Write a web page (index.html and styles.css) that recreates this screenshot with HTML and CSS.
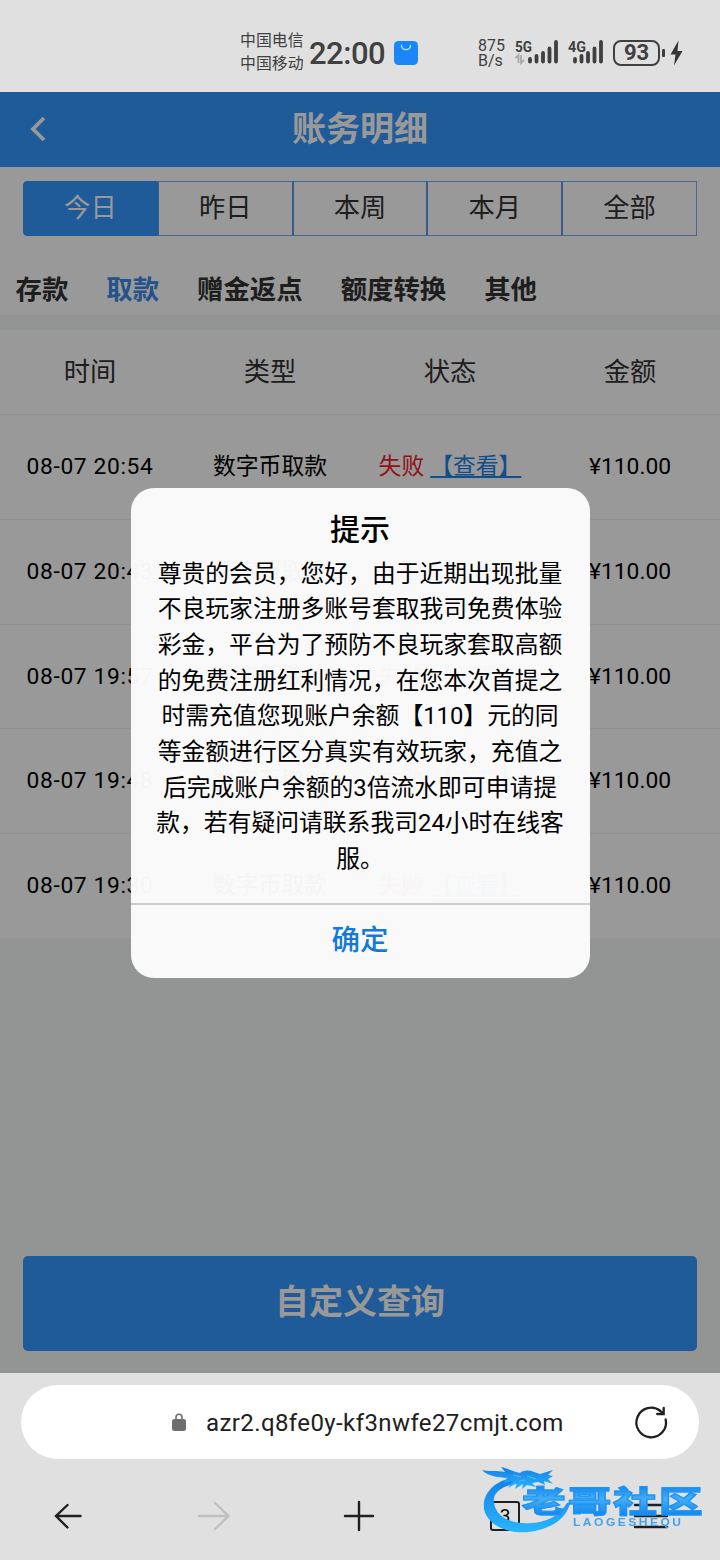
FILE: index.html
```html
<!DOCTYPE html>
<html lang="zh-CN">
<head>
<meta charset="utf-8">
<title>账务明细</title>
<link rel="stylesheet" href="styles.css">
</head>
<body>
<div class="phone">
  <header class="status">
    <div class="carriers"><span>中国电信</span><span>中国移动</span></div>
    <div class="clock">22:00</div>
    <svg class="bag" viewBox="0 0 24 24"><rect width="24" height="24" rx="4.5" fill="#1b86f8"/><path d="M7.5 4.5a4.5 4.2 0 0 0 9 0" fill="none" stroke="#c8f1ff" stroke-width="1.3" stroke-linecap="round"/></svg>
    <div class="rate"><span>875</span><span>B/s</span></div>
    <svg class="signals" viewBox="0 0 90 28">
      <g class="signal-name"><text x="0" y="12.500" textLength="17" lengthAdjust="spacingAndGlyphs">5G</text><text x="53" y="12.500" textLength="18" lengthAdjust="spacingAndGlyphs">4G</text></g>
      <g stroke="#3f3f3f" stroke-width="3.8" stroke-linecap="round"><path d="M15 20v2.5M21.5 17v5.5M28 14v8.500M34.500 9.500v13M41 3v19.500M60 20v2.500M66.500 17v5.500M73 14v8.500M79.500 9.500v13M86 3v19.500"/></g>
      <path d="M0.500 19l3-3v8M6 16v8l3-3" fill="none" stroke="#aaa" stroke-width="1.800"/>
    </svg>
    <div class="battery"><span>93</span></div>
    <i class="battery-tip"></i>
    <svg class="bolt" viewBox="0 0 13 26"><path d="M8.500 0.500L0.500 14.500h5L4 25.500l8.500-14.500h-5z" fill="#353535"/></svg>
  </header>

  <main class="page">
    <div class="titlebar">
      <svg class="back" viewBox="0 0 18 28"><path d="M15 3L4 14l11 11" fill="none" stroke="#fff" stroke-width="3.800"/></svg>
      <h1>账务明细</h1>
    </div>
    <nav class="days">
      <span class="day active">今日</span><span class="day">昨日</span><span class="day">本周</span><span class="day">本月</span><span class="day">全部</span>
    </nav>
    <nav class="kinds">
      <span>存款</span><span class="on">取款</span><span>赠金返点</span><span>额度转换</span><span>其他</span>
    </nav>
    <section class="table">
      <div class="row head"><span>时间</span><span>类型</span><span>状态</span><span>金额</span></div>
      <div class="row"><span class="num time">08-07 20:54</span><span>数字币取款</span><span class="state"><b>失败</b><a>【查看】</a></span><span class="num">¥110.00</span></div>
      <div class="row"><span class="num time">08-07 20:43</span><span>数字币取款</span><span class="state"><b>失败</b><a>【查看】</a></span><span class="num">¥110.00</span></div>
      <div class="row"><span class="num time">08-07 19:57</span><span>数字币取款</span><span class="state"><b>失败</b><a>【查看】</a></span><span class="num">¥110.00</span></div>
      <div class="row"><span class="num time">08-07 19:48</span><span>数字币取款</span><span class="state"><b>失败</b><a>【查看】</a></span><span class="num">¥110.00</span></div>
      <div class="row"><span class="num time">08-07 19:30</span><span>数字币取款</span><span class="state"><b>失败</b><a>【查看】</a></span><span class="num">¥110.00</span></div>
    </section>
    <div class="query">自定义查询</div>
    <div class="mask">
      <div class="dialog">
        <h2>提示</h2>
        <p>尊贵的会员，您好，由于近期出现批量<br>不良玩家注册多账号套取我司免费体验<br>彩金，平台为了预防不良玩家套取高额<br>的免费注册红利情况，在您本次首提之<br>时需充值您现账户余额【<span class="digits">110</span>】元的同<br>等金额进行区分真实有效玩家，充值之<br>后完成账户余额的<span class="digits">3</span>倍流水即可申请提<br>款，若有疑问请联系我司<span class="digits">24</span>小时在线客<br>服。</p>
        <div class="ok">确定</div>
      </div>
    </div>
  </main>

  <footer class="browser">
    <div class="address">
      <svg class="lock" viewBox="0 0 14 18"><rect x="0" y="6" width="14" height="12" rx="2.500" fill="#6e6e6e"/><path d="M4 7V4.300a3 3 0 0 1 6 0V7" fill="none" stroke="#6e6e6e" stroke-width="1.600"/></svg>
      <span class="url">azr2.q8fe0y-kf3nwfe27cmjt.com</span>
      <svg class="reload" viewBox="0 0 36 36"><path d="M32.700 15.500A14.800 14.800 0 1 1 27.500 7L30.500 9.800M30.700 4v6h-6.500" fill="none" stroke="#202020" stroke-width="2.300" stroke-linecap="round"/></svg>
    </div>
    <div class="tools">
      <svg viewBox="0 0 36 36"><path d="M30.500 18H6M17.500 7L6 18l11.500 11.500" /></svg>
      <svg viewBox="0 0 36 36" class="off"><path d="M3 18h29.500M19 5l13.500 13L19 31"/></svg>
      <svg viewBox="0 0 36 36"><path d="M18 4v28M4 18h28"/></svg>
      <span class="tabs">3</span>
      <svg viewBox="0 0 36 36"><path d="M2 7h32M2 18h32M2 29h32"/></svg>
    </div>
    <div class="watermark">
      <svg class="dragon" viewBox="0 0 92 72">
        <defs><linearGradient id="sea" x1="0" y1="0" x2="0" y2="1"><stop offset="0" stop-color="#147ee8"/><stop offset="1" stop-color="#28b6fb"/></linearGradient></defs>
        <path fill="url(#sea)" d="M36 12C13 15 1 29 3 44c4 19 31 28 55 21 18-5 28-14 31-27-3-1-4 1-5 3-8 11-19 16-33 17-20 2-36-6-38-20C11 28 21 20 40 18z"/>
        <path fill="url(#sea)" d="M1 5c8 2 15 0 23 2l-4-5c7 1 12 5 19 6 4-3 9-3 14-1l6 2 13-4-5 5 5 1-5 3 5 5-9-3 1 4-7-3-6 1 4 4-9-2-5 4 1-5-8 5 2-6-9 5 5-7-10 2 4-5C18 12 7 12 1 5z"/>
        <path d="M32 10l8 2M46 11l9 3M38 16l6-1" stroke="#5db9fb" stroke-width="1"/>
      </svg>
      <span class="brand">老哥社区</span>
      <span class="latin">LAOGESHEQU</span>
    </div>
  </footer>
</div>
</body>
</html>
```
FILE: styles.css
```css
* { box-sizing: border-box; }
body { margin: 0; font-family: Roboto, "Noto Sans CJK SC", sans-serif; color: #000; }
h1, h2, p { margin: 0; }
svg { display: block; flex: none; }
.phone { width: 720px; height: 1560px; display: flex; flex-direction: column; background: #e0e0e0; overflow: hidden; }

.status { height: 92px; padding: 14px 0 0 240px; display: flex; align-items: center; color: #404040; white-space: nowrap; }
.carriers { width: 69px; margin-top: -4px; display: flex; flex-direction: column; font: 15.900px/23px "Noto Sans CJK SC", sans-serif; }
.clock { width: 85px; padding-top: 1px; font: 500 31px/40px Roboto, sans-serif; letter-spacing: -.5px; }
.bag { width: 24px; height: 24px; }
.rate { width: 37px; margin-left: 60px; display: flex; flex-direction: column; font-size: 16px; line-height: 15px; }
.signals { width: 90px; height: 28px; }
.signal-name { font: 700 14px Roboto, sans-serif; fill: #404040; }
.battery { width: 47px; height: 26px; margin-left: 8px; border: 2px solid #404040; border-radius: 8px; display: flex; align-items: center; justify-content: center; font-size: 22px; font-weight: 700; line-height: 22px; }
.battery-tip { width: 3px; height: 8px; margin-left: 2px; border-radius: 1px; background: #404040; }
.bolt { width: 13px; height: 26px; margin-left: 5px; }

.page { position: relative; height: 1281px; display: flex; flex-direction: column; background: #f4f8f5; }
.titlebar { height: 75px; flex: none; display: flex; align-items: center; padding-bottom: 2px; background: #3496ff; color: #fff; }
.back { width: 18px; height: 28px; margin-left: 29px; }
.titlebar h1 { flex: 1; padding-right: 47px; text-align: center; font: 700 34px/50px "Noto Sans CJK SC", sans-serif; margin-top: -4px; }
.days { flex: none; padding: 14px 23px 0; height: 69px; display: flex; background: #fff; }
.day { flex: 1; border: 1px solid #7faaf0; border-color: #7daaf0 #5b96ee; display: flex; align-items: center; justify-content: center; padding-bottom: 1px; font-size: 26.300px; line-height: 40px; color: #333; }
.day:last-child { border-right-color: #7daaf0; }
.day.active { background: #3496ff; color: #fff; border-color: #3496ff; border-radius: 4px 0 0 4px; }
.kinds { flex: none; height: 79px; padding: 34px 0 0 15.500px; display: flex; gap: 38px; background: #fff; font-size: 26.400px; font-weight: 700; line-height: 40px; color: #333; }
.kinds .on { color: #3b8ae6; }
.table { flex: none; margin-top: 15px; background: #fff; }
.row { height: 104.750px; display: grid; grid-template-columns: repeat(4, 180px); align-items: center; text-align: center; border-bottom: 1px solid #f1f1f1; padding-top: .5px; font-size: 22.800px; line-height: 36px; white-space: nowrap; }
.row.head { height: 85px; font-size: 26.300px; color: #333; padding: 0; }
.row:last-child { height: 104px; border-bottom: 0; }
.time { letter-spacing: .62px; }
.state { display: flex; justify-content: center; gap: 6px; }
.state b { font-weight: 400; color: #f02028; }
.state a { color: #1e82e6; text-decoration: underline; text-decoration-thickness: 2px; text-underline-offset: 2px; }
.query { margin: auto 23px 22px; height: 95px; border-radius: 5px; background: #3496ff; color: #fff; font-size: 34px; font-weight: 700; line-height: 93px; text-align: center; }

.mask { position: absolute; inset: 0; display: flex; justify-content: center; align-items: flex-start; padding-top: 395.500px; background: rgba(0, 0, 0, .4); }
.dialog { width: 459px; height: 490.500px; border-radius: 23px; background: rgba(252, 252, 252, .97); text-align: center; }
.dialog h2 { padding-top: 18px; font-size: 30px; font-weight: 500; line-height: 48px; }
.dialog p { height: 349.500px; padding-top: 0; font: 23.800px/35.700px "Noto Sans CJK SC", sans-serif; white-space: nowrap; }
.digits { font-family: Roboto, sans-serif; line-height: 1; }
.ok { border-top: 2px solid #ccc; height: 74px; font-size: 28.500px; font-weight: 500; line-height: 71px; color: #1479dc; }

.browser { position: relative; height: 187px; padding: 12px 21px 0; }
.address { height: 74px; border-radius: 37px; background: #fff; display: flex; align-items: center; padding: 0 30px 0 151px; color: #202020; }
.lock { width: 14px; height: 18px; }
.url { margin-left: 20px; flex: 1; font-size: 24px; letter-spacing: .4px; line-height: 34px; padding-top: 2px; white-space: nowrap; }
.reload { width: 36px; height: 36px; }
.tools { display: grid; grid-template-columns: repeat(5, 145.750px); justify-items: center; align-items: center; height: 36px; margin: 39px 0 0 -26px; }
.tools svg { width: 36px; height: 36px; fill: none; stroke: #202020; stroke-width: 2.400; stroke-linecap: round; }
.tools .off { stroke: #bfbfbf; }
.tabs { width: 30px; height: 30px; border: 2px solid #202020; border-radius: 3px; text-align: center; font-size: 19px; line-height: 26px; }
.watermark { position: absolute; left: 481px; top: 92px; width: 225px; height: 76px; }
.dragon { position: absolute; left: 0; top: 0; width: 92px; height: 72px; }
.brand { position: absolute; left: 41px; top: 16px; font: 900 30px/36px "Noto Sans CJK SC", sans-serif; letter-spacing: 1.500px; white-space: nowrap; transform: scaleX(1.450); transform-origin: left; color: transparent; background: linear-gradient(#1489f0 15%, #43aef8 50%, #168bef 90%); background-clip: text; -webkit-background-clip: text; -webkit-text-stroke: 1px #2093f2; }
.latin { position: absolute; left: 92px; top: 52px; font: 700 10px/12px "Liberation Sans", sans-serif; letter-spacing: 2.100px; transform: scaleX(1.200); transform-origin: left; color: #42a4ea; }
```
